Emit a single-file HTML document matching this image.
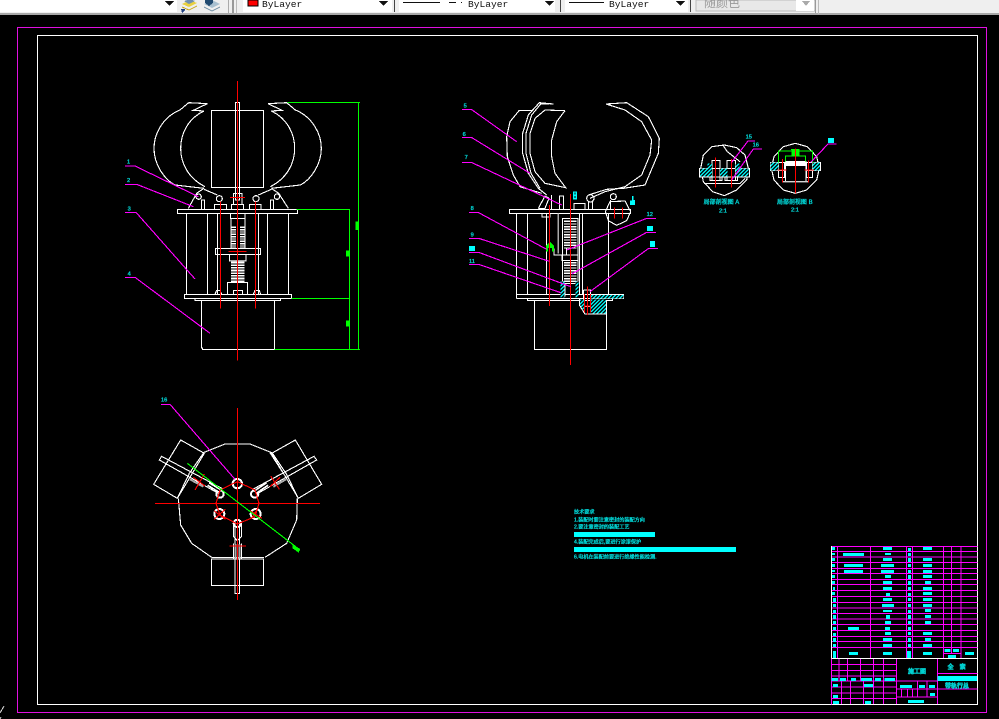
<!DOCTYPE html>
<html lang="zh"><head><meta charset="utf-8"><title>CAD</title>
<style>
html,body{margin:0;padding:0;background:#000;width:999px;height:719px;overflow:hidden}
svg{display:block;position:absolute;left:0;top:0;font-family:"Liberation Sans","Noto Sans CJK SC",sans-serif}
.w{fill:none;stroke:#fff;stroke-width:3.400}
.r{fill:none;stroke:#f00;stroke-width:3.400}
.g{fill:none;stroke:#0f0;stroke-width:3.400}
.m{fill:none;stroke:#f0f;stroke-width:3.400}
.c{fill:#0ff}
.t{fill:#00e0e0;stroke:#00d0d0;stroke-width:1}
</style></head><body>
<svg width="999" height="719" viewBox="0 0 999 719" shape-rendering="crispEdges">
<defs>
<pattern id="h" width="8" height="8" patternUnits="userSpaceOnUse" patternTransform="rotate(45)"><rect width="8" height="8" fill="#000"/><rect width="4" height="8" fill="#0ff"/></pattern>
</defs>
<rect width="999" height="719" fill="#000"/>
<!-- toolbar -->
<rect width="999" height="14" fill="#efefef"/>
<rect y="13" width="999" height="2" fill="#a8a8a8"/>
<rect width="177" height="12" fill="#fff"/>
<path d="M165 1h9l-4.500 5z" fill="#111"/>
<path d="M182 4l8-4 7 3-8 4z" fill="#e8d040"/><path d="M182 7l7 3 8-4" fill="none" stroke="#c8a818" stroke-width="1"/><path d="M184 1l6-2 5 2-6 3z" fill="#7090b0"/>
<path d="M181 9l4-0v1l-3 3z" fill="#204080"/>
<path d="M204 4l8-4 8 4-8 4z" fill="#a8c0d0"/><path d="M204 7l8 4 8-4" fill="none" stroke="#6a8aa0" stroke-width="1"/><path d="M205 0h8v3l-4 3-4-3z" fill="#204a70"/>
<rect x="228" y="0" width="1" height="13" fill="#aaa"/><rect x="232" y="0" width="2" height="13" fill="#999"/><rect x="236" y="0" width="1" height="13" fill="#bbb"/>
<rect x="243" width="149" height="12" fill="#fff"/>
<rect x="248" y="0" width="10" height="6" fill="#f00" stroke="#000" stroke-width="1"/>
<text x="262" y="7" font-size="9.600" style="font-family:'Liberation Mono',monospace" fill="#111">ByLayer</text>
<path d="M379 1h9l-4.500 5z" fill="#111"/>
<rect x="394" width="1" height="12" fill="#444"/>
<rect x="399" width="156" height="12" fill="#fff"/>
<rect x="403" y="2" width="37" height="1" fill="#111"/><rect x="449" y="2" width="7" height="1" fill="#111"/><rect x="461" y="2" width="1" height="1" fill="#111"/>
<text x="468" y="7" font-size="9.600" style="font-family:'Liberation Mono',monospace" fill="#111">ByLayer</text>
<path d="M545 1h9l-4.500 5z" fill="#111"/>
<rect x="560" width="1" height="12" fill="#444"/>
<rect x="565" width="123" height="12" fill="#fff"/>
<rect x="569" y="2" width="35" height="1" fill="#111"/>
<text x="609" y="7" font-size="9.600" style="font-family:'Liberation Mono',monospace" fill="#111">ByLayer</text>
<path d="M676 1h9l-4.500 5z" fill="#111"/>
<rect x="690" width="1" height="12" fill="#444"/>
<rect x="696" width="119" height="11" fill="#e8e8e8" stroke="#bbb" stroke-width="1"/>
<rect x="796" width="18" height="11" fill="#fff"/>
<text x="704" y="7" font-size="12" fill="#9a9a9a">随颜色</text>
<path d="M802 1h8l-4 5z" fill="#aaa"/>
<rect x="815" width="1" height="13" fill="#999"/><rect x="818" width="1" height="14" fill="#bbb"/>

<!-- frames -->
<rect x="17.500" y="27.500" width="969" height="685" fill="none" stroke="#e010e0" stroke-width="1"/>
<rect x="37.500" y="35.500" width="940" height="669" fill="none" stroke="#fff" stroke-width="1"/>
<path d="M4 706L0 713M1 717L0 719" stroke="#ddd" stroke-width="1" fill="none"/>

<!-- front view -->
<g transform="translate(130,80) scale(.33333)">
<g class="w">
<path d="M232 71L176 68L150 90C100 110 72 160 72 205C72 255 105 300 135 315L222 325"/>
<path d="M232 71L190 91L222 93C175 115 152 160 152 205C152 250 175 295 225 320"/>
<path d="M414 71L470 68L496 90C546 110 574 160 574 205C574 255 541 300 511 315L424 325"/>
<path d="M414 71L456 91L424 93C471 115 494 160 494 205C494 250 471 295 421 320"/>
<rect x="244" y="91" width="157" height="232"/>
<rect x="316" y="68" width="13" height="292"/>
<rect x="142" y="388" width="361" height="13"/>
<path d="M169 401V643M233 401V643M263 401V643M385 401V643M412 401V643M476 401V643"/>
<rect x="163" y="643" width="322" height="13"/>
<path d="M195 656V662H452V656M214 662V800L218 808H434V662"/>
<path d="M222 325L200 340L175 385M424 325L446 340L475 385M222 328L262 345M424 328L385 345"/>
<circle cx="268" cy="356" r="9"/><circle cx="378" cy="356" r="9"/><circle cx="206" cy="350" r="8"/><circle cx="441" cy="350" r="8"/>
<path d="M253 388V373H290V388M358 388V373H393V388M305 388V373H340V388M310 372V340H336V372M215 388V360H224V388M422 388V360H431V388"/>
<path d="M301 401V416H345V401M303 416V505M345 416V505"/>
<rect x="256" y="505" width="136" height="18"/>
<rect x="298" y="523" width="50" height="20"/>
<path d="M292 643V607H353V643M255 643L260 631H270L275 643M370 643L375 631H388L392 643M310 643V631H338V643"/>
</g>
<path d="M311 440V505M337 440V505" fill="none" stroke="#fff" stroke-width="14" stroke-dasharray="4 3"/>
<path d="M323 545V606" fill="none" stroke="#fff" stroke-width="40" stroke-dasharray="5 3"/>
<rect x="300" y="540" width="46" height="4" fill="#aaa"/>
<g class="r"><path d="M323 3V842M271 365V686M376 365V686M300 352H345M295 515H350"/></g>
<g class="g"><path d="M472 68H690M686 68V808M500 388H660M658 388V808M485 656H660M434 808H690"/></g>
<rect x="676" y="425" width="11" height="25" fill="#0f0"/><rect x="648" y="512" width="9" height="18" fill="#0f0"/><rect x="648" y="722" width="9" height="18" fill="#0f0"/>
<g class="m"><path d="M-15 258H15L205 350M-15 313H20L190 380M-15 397H18L195 597M-15 592H15L240 760"/></g>
<g font-size="17" class="t"><text x="-9" y="250">1</text><text x="-9" y="306">2</text><text x="-7" y="392">3</text><text x="-7" y="586">4</text></g>
</g>

<!-- section view -->
<g transform="translate(450,90) scale(.33333)">
<g class="w">
<path d="M248 61L208 61L180 95L170 140L172 200L190 255L210 290L275 310"/>
<path d="M310 42L268 38L235 75L218 130L218 190L235 250L265 295L290 315"/>
<path d="M298 42L272 42L245 75L228 130L228 190L243 250L270 295"/>
<path d="M345 62L285 60L255 85L240 130L240 190L255 245L285 280L347 293L315 250L305 200L305 150L320 95L345 62"/>
<path d="M468 42L530 38L595 80L628 145L625 190L585 285L520 295L470 298L415 315"/>
<path d="M468 42L525 60L575 95L605 150L600 195L575 255L525 290L465 305L420 325"/>
<rect x="178" y="358" width="364" height="13"/>
<path d="M199 371V626M233 371V613M290 371V613M388 371V613M398 371V613M476 371V613"/>
<path d="M199 613H388M199 626H520V613H388"/>
<path d="M232 626V632H488V626M253 632V778H470V632"/>
<circle cx="421" cy="325" r="11"/><circle cx="490" cy="320" r="9"/>
<path d="M415 358V336H427V358M372 358V340H405V358M265 355L285 318L297 325L285 355H265M305 358V315M328 358V318H340V358M482 358V330M276 371V381H300V371"/>
<path d="M466 365L480 335L525 333L542 365L530 392L500 406L475 392L466 365"/>
<path d="M338 385H384V575H338ZM336 495H384V512H336Z"/>
<path d="M345 620V580H380V620M312 475V495H350V475"/>
<path d="M388 626V645L405 672H450M470 632V672H440M400 600V650H422V600H400"/>
</g>
<path d="M361 392V480" fill="none" stroke="#fff" stroke-width="38" stroke-dasharray="4 4"/>
<path d="M361 516V575" fill="none" stroke="#fff" stroke-width="38" stroke-dasharray="4 4"/>
<path d="M325 370V490" fill="none" stroke="#aaa" stroke-width="5"/>
<rect x="422" y="615" width="98" height="10" fill="url(#h)"/>
<path d="M422 628H468V670H425L422 660Z" fill="url(#h)"/>
<path d="M390 628H402V662L390 645Z" fill="url(#h)"/>
<rect x="332" y="575" width="12" height="47" fill="url(#h)"/><rect x="376" y="575" width="10" height="47" fill="url(#h)"/>
<path d="M288 484V468L300 456L312 468V484H306V474H294V484Z" fill="#0f0"/>
<g class="r"><path d="M361 312V825M298 345V648M412 590V675M402 648H422"/><path d="M493 353V385M517 353V385M404 612V668M422 612V668"/></g>
<g class="m"><path d="M36 58H64L200 155M36 142H64L240 250M36 217H64L335 345M57 367H84L290 478M57 445H86L298 514M57 487H86L362 590M57 523H86L332 608M618 385H590L350 480M618 427H590L365 552M624 475H596L420 605"/></g>
<g font-size="17" class="t"><text x="41" y="53">5</text><text x="38" y="138">6</text><text x="44" y="207">7</text><text x="62" y="360">8</text><text x="62" y="440">9</text><text x="57" y="519">11</text><text x="590" y="378">12</text></g>
<g class="c"><rect x="57" y="468" width="18" height="15"/><rect x="591" y="408" width="18" height="15"/><rect x="600" y="453" width="15" height="18"/><path d="M369 304H381V328H369ZM373 308V314H377V308ZM373 318V324H377V318Z" fill-rule="evenodd"/><path d="M546 318H551V330H555V345H540V332H546Z"/></g>
</g>

<!-- details -->
<g transform="translate(690,125) scale(.33333)">
<g class="w">
<path d="M65 65L103 60L140 68L165 90L175 130L170 165L140 195L103 212L68 200L40 170L32 130L40 90Z"/>
<path d="M100 62L112 80L150 110M28 130H178V156H28ZM42 175L60 175H150L165 160"/>
<path d="M66 106V166H90V106H66ZM111 106V166H137V106H111ZM60 156V167H96V156M105 156V167H142V156"/>
<path d="M280 65L316 55L352 65L380 95L388 130L380 165L350 195L316 205L280 195L252 165L244 130L252 95Z"/>
<path d="M242 112H392V137H242ZM278 170H356"/>
<path d="M266 112V158H284V112M350 112V158H368V112"/>
</g>
<rect x="30" y="131" width="36" height="24" fill="url(#h)"/><rect x="90" y="131" width="22" height="24" fill="url(#h)"/><rect x="137" y="131" width="38" height="24" fill="url(#h)"/><rect x="53" y="116" width="13" height="15" fill="url(#h)"/><rect x="137" y="116" width="12" height="15" fill="url(#h)"/>
<rect x="242" y="113" width="24" height="24" fill="url(#h)"/><rect x="368" y="113" width="22" height="24" fill="url(#h)"/>
<rect x="286" y="110" width="62" height="60" fill="#000" stroke="#fff" stroke-width="3"/><rect x="286" y="110" width="62" height="13" fill="#fff"/>
<rect x="278" y="169" width="78" height="4" fill="#aaa"/>
<g class="g"><path d="M266 112V78H368V112M286 110V93H347V110"/></g><path d="M305 92V80L303 72H328V92Z" fill="#0f0"/>
<g class="r"><path d="M76 98V188M125 102V188M277 102V172M355 106V172M316 70V205M262 135H290M344 135H372"/></g>
<g class="m"><path d="M195 48H174L125 112M216 72H190L125 165M440 57H414L362 112"/></g>
<g font-size="17" class="t"><text x="167" y="41">15</text><text x="188" y="65">16</text><text x="41" y="237" font-size="18">局部剖视图 A</text><text x="87" y="263">2:1</text><text x="261" y="237" font-size="18">局部剖视图 B</text><text x="303" y="260">2:1</text></g>
<rect x="414" y="39" width="18" height="15" class="c"/>
</g>

<!-- plan view -->
<g transform="translate(140,390) scale(.33333)">
<g class="w">
<path d="M190 188L255 162H330L395 188M472 325L470 390L440 460L375 502M215 502L155 460L122 405L115 325"/>
<path d="M190 190L148 250L112 325M396 188L438 250L475 325M390 188L430 250"/>
<path d="M122 150L193 190L112 325L41 283ZM466 150L395 190L475 325L545 283Z"/>
<path d="M65 199L58 210L235 310L245 295ZM522 199L530 210L350 312L340 297Z"/>
<rect x="214" y="507" width="157" height="79"/><path d="M214 502H372"/>
<rect x="285" y="390" width="14" height="221"/>
<path d="M281 400V440L292 452L304 440V400ZM281 460V505M304 460V505"/>
<path d="M292 400V450"/>
</g>
<g fill="none" stroke="#fff" stroke-width="6">
<circle cx="292" cy="281" r="14"/><circle cx="344" cy="312" r="11"/><circle cx="238" cy="372" r="15"/><circle cx="347" cy="372" r="15"/><circle cx="292" cy="400" r="11"/><circle cx="240" cy="312" r="11"/>
</g>
<path d="M205 282L238 302M382 282L348 305" fill="none" stroke="#fff" stroke-width="14"/>
<path d="M205 282L238 302M382 282L348 305" fill="none" stroke="#000" stroke-width="4"/>
<path d="M150 268L190 290M438 268L400 290M286 462V505M298 462V505" fill="none" stroke="#aaa" stroke-width="6"/>
<g class="r"><path d="M292 54V630M45 340H540M268 468H318M292 275L345 300L357 340L345 380L292 402L240 375L228 340L240 300Z"/><path d="M165 300L193 252M160 262L195 288M392 258L418 298M390 290L420 262M222 388L256 358M222 362L256 388M330 362L366 385M335 385L355 352"/></g>
<path d="M142 220L480 480" class="g"/><path d="M458 465L480 476L476 488L458 475Z" fill="#0f0"/>
<path d="M63 43H90L285 268" class="m"/>
<text x="63" y="35" font-size="17" class="t">16</text>
</g>

<!-- tech text -->
<g transform="translate(565,500) scale(.33333)" font-size="15.400" class="t">
<text x="27" y="41">技术要求</text>
<text x="27" y="65">1.装配时要注意密封的装配方向</text>
<text x="27" y="86">2.要注意密封的装配工艺</text>
<rect x="27" y="96" width="243" height="15" class="c" style="stroke:none"/>
<text x="27" y="131">4.装配完成后,要进行涂漆保护</text>
<rect x="27" y="141" width="486" height="15" class="c" style="stroke:none"/>
<text x="27" y="176">6.电机在装配前要进行绝缘性能检测.</text>
</g>

<!-- title block -->
<g transform="translate(825,540) scale(.33333)">
<g class="m" style="stroke-width:3">
<path d="M20 19H458M20 35H458M20 51H458M20 68H458M20 85H458M20 101H458M20 118H458M20 134H458M20 151H458M20 169H458M20 187H458M20 204H458M20 221H458M20 237H458M20 254H458M20 271H458M20 289H458M20 305H458M20 323H458"/>
<path d="M37 19V355M136 19V355M244 19V355M262 19V355M355 19V355M379 19V323M408 19V355M379 323V340M355 340H408"/>
<path d="M20 355V493M20 373H214M20 391H214M20 408H214M20 423H214M20 441H214M20 459H214M20 476H214"/>
<path d="M42 355V423M67 355V423M106 355V423M145 355V492M175 355V492M214 355V492M337 355V492M49 423V492M76 423V492M115 423V492"/>
<path d="M214 423H337M214 447H337M214 471H337M277 423V471M306 423V471M229 447V471M247 447V471M262 447V471M337 400H458M337 447H458"/>
</g>
<rect x="18" y="18" width="3" height="337" fill="#fff"/>
<path d="M20 355H458" fill="none" stroke="#fff" stroke-width="3"/>
<g class="c">
<rect x="54" y="39" width="63" height="9"/><rect x="57" y="72" width="57" height="9"/><rect x="57" y="90" width="57" height="9"/><rect x="69" y="261" width="33" height="9"/><rect x="72" y="336" width="27" height="9"/>
<rect x="174" y="21" width="27" height="9"/><rect x="180" y="39" width="18" height="6"/><rect x="174" y="54" width="27" height="9"/><rect x="168" y="72" width="39" height="9"/><rect x="168" y="90" width="39" height="9"/><rect x="180" y="105" width="18" height="9"/><rect x="174" y="123" width="27" height="9"/><rect x="174" y="141" width="27" height="9"/><rect x="183" y="159" width="12" height="9"/><rect x="174" y="174" width="27" height="9"/><rect x="171" y="192" width="36" height="9"/><rect x="174" y="210" width="27" height="6"/><rect x="183" y="225" width="12" height="12"/><rect x="180" y="243" width="18" height="9"/><rect x="180" y="261" width="15" height="9"/><rect x="180" y="276" width="18" height="9"/><rect x="174" y="294" width="27" height="9"/><rect x="174" y="312" width="27" height="9"/><rect x="174" y="336" width="27" height="9"/>
<rect x="249" y="24" width="9" height="9"/><rect x="249" y="39" width="9" height="9"/><rect x="249" y="54" width="9" height="12"/><rect x="249" y="72" width="9" height="9"/><rect x="249" y="90" width="9" height="9"/><rect x="249" y="105" width="9" height="12"/><rect x="249" y="123" width="9" height="12"/><rect x="249" y="141" width="9" height="9"/><rect x="249" y="159" width="9" height="9"/><rect x="249" y="174" width="9" height="9"/><rect x="249" y="192" width="9" height="9"/><rect x="249" y="210" width="9" height="9"/><rect x="249" y="225" width="9" height="12"/><rect x="249" y="243" width="9" height="9"/><rect x="249" y="261" width="9" height="9"/><rect x="249" y="276" width="9" height="9"/><rect x="249" y="294" width="9" height="12"/><rect x="249" y="312" width="9" height="9"/><rect x="246" y="333" width="12" height="21"/>
<rect x="21" y="21" width="9" height="9"/><rect x="21" y="39" width="9" height="6"/><rect x="21" y="54" width="9" height="9"/><rect x="21" y="72" width="9" height="9"/><rect x="21" y="90" width="9" height="6"/><rect x="21" y="105" width="9" height="9"/><rect x="21" y="123" width="9" height="9"/><rect x="24" y="141" width="6" height="9"/><rect x="21" y="156" width="9" height="9"/><rect x="24" y="174" width="9" height="12"/><rect x="24" y="192" width="9" height="9"/><rect x="24" y="210" width="9" height="9"/><rect x="24" y="225" width="9" height="12"/><rect x="24" y="243" width="9" height="9"/><rect x="24" y="261" width="9" height="9"/><rect x="24" y="279" width="9" height="9"/><rect x="24" y="294" width="9" height="12"/><rect x="24" y="312" width="9" height="9"/><rect x="24" y="333" width="9" height="21"/>
<rect x="294" y="21" width="27" height="9"/><rect x="294" y="54" width="27" height="9"/><rect x="294" y="72" width="27" height="9"/><rect x="294" y="90" width="27" height="9"/><rect x="294" y="105" width="27" height="9"/><rect x="300" y="123" width="18" height="9"/><rect x="294" y="141" width="27" height="9"/><rect x="294" y="156" width="27" height="9"/><rect x="294" y="174" width="27" height="9"/><rect x="294" y="192" width="27" height="9"/><rect x="300" y="207" width="18" height="9"/><rect x="300" y="225" width="18" height="9"/><rect x="300" y="243" width="18" height="9"/><rect x="294" y="276" width="27" height="9"/><rect x="300" y="294" width="18" height="9"/><rect x="294" y="312" width="27" height="9"/><rect x="294" y="336" width="27" height="9"/>
<rect x="358" y="327" width="18" height="9"/><rect x="384" y="327" width="18" height="9"/><rect x="420" y="336" width="27" height="9"/><rect x="369" y="345" width="24" height="9"/>
<rect x="20" y="414" width="19" height="9"/><rect x="45" y="414" width="18" height="9"/><rect x="78" y="414" width="15" height="9"/><rect x="108" y="414" width="33" height="9"/><rect x="150" y="414" width="18" height="9"/><rect x="178" y="414" width="32" height="9"/>
<rect x="24" y="432" width="15" height="9"/><rect x="117" y="432" width="27" height="9"/><rect x="24" y="465" width="15" height="9"/><rect x="24" y="483" width="18" height="9"/><rect x="120" y="483" width="18" height="9"/>
<rect x="225" y="435" width="36" height="9"/><rect x="282" y="435" width="18" height="9"/><rect x="312" y="435" width="18" height="9"/><rect x="315" y="459" width="15" height="9"/><rect x="249" y="480" width="48" height="9"/>
<rect x="337" y="408" width="119" height="15"/>
</g>
<g class="t" font-size="18" style="stroke-width:2"><text x="249" y="400">施工图</text><text x="368" y="387">全</text><text x="404" y="387">索</text><text x="360" y="444">带轨行总</text></g>
</g>
</svg>
</body></html>
